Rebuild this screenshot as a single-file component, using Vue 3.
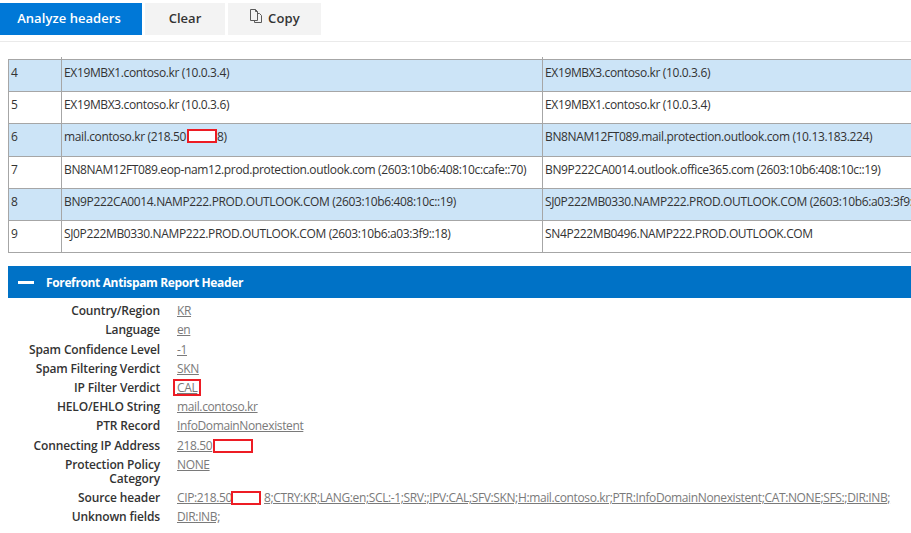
<script setup>
const rows = [
  { n: 4, a: 'EX19MBX1.contoso.kr (10.0.3.4)', b: 'EX19MBX3.contoso.kr (10.0.3.6)', blue: true },
  { n: 5, a: 'EX19MBX3.contoso.kr (10.0.3.6)', b: 'EX19MBX1.contoso.kr (10.0.3.4)' },
  { n: 6, a: 'mail.contoso.kr (218.50', mask: '8)', b: 'BN8NAM12FT089.mail.protection.outlook.com (10.13.183.224)', blue: true },
  { n: 7, a: 'BN8NAM12FT089.eop-nam12.prod.protection.outlook.com (2603:10b6:408:10c:cafe::70)', b: 'BN9P222CA0014.outlook.office365.com (2603:10b6:408:10c::19)' },
  { n: 8, a: 'BN9P222CA0014.NAMP222.PROD.OUTLOOK.COM (2603:10b6:408:10c::19)', b: 'SJ0P222MB0330.NAMP222.PROD.OUTLOOK.COM (2603:10b6:a03:3f9::18)', blue: true },
  { n: 9, a: 'SJ0P222MB0330.NAMP222.PROD.OUTLOOK.COM (2603:10b6:a03:3f9::18)', b: 'SN4P222MB0496.NAMP222.PROD.OUTLOOK.COM' }
]
const fields = [
  { k: 'Country/Region', v: 'KR' },
  { k: 'Language', v: 'en' },
  { k: 'Spam Confidence Level', v: '-1' },
  { k: 'Spam Filtering Verdict', v: 'SKN' },
  { k: 'IP Filter Verdict', v: 'CAL', box: true },
  { k: 'HELO/EHLO String', v: 'mail.contoso.kr' },
  { k: 'PTR Record', v: 'InfoDomainNonexistent' },
  { k: 'Connecting IP Address', v: '218.50', ip: true },
  { k: 'Protection Policy Category', v: 'NONE' },
  { k: 'Source header', v: 'CIP:218.50', src: '8;CTRY:KR;LANG:en;SCL:-1;SRV:;IPV:CAL;SFV:SKN;H:mail.contoso.kr;PTR:InfoDomainNonexistent;CAT:NONE;SFS:;DIR:INB;' },
  { k: 'Unknown fields', v: 'DIR:INB;' }
]
</script>

<template>
  <div class="page">
    <div class="toolbar">
      <button class="btn primary"><span class="lbl">Analyze headers</span></button>
      <button class="btn clear"><span class="lbl">Clear</span></button>
      <button class="btn copy">
        <svg width="14" height="16" viewBox="0 0 14 16" fill="none" stroke="#5a5a5a" stroke-width="1">
          <path d="M1.5 1.5h5l2 2v9h-7z" />
          <path d="M6.5 1.5v2h2" />
          <path d="M8.5 5.5h2l2 2v7h-7v-2" />
        </svg>
        <span class="lbl">Copy</span>
      </button>
    </div>

    <div class="table">
      <div class="stub">
        <div class="cell num"></div>
        <div class="cell from"></div>
      </div>
      <div v-for="r in rows" :key="r.n" class="row" :class="{ blue: r.blue }">
        <div class="cell num">{{ r.n }}</div>
        <div class="cell from">
          {{ r.a }}<span v-if="r.mask" class="mask"></span>{{ r.mask }}
        </div>
        <div class="cell to">{{ r.b }}</div>
      </div>
    </div>

    <div class="section">
      <span class="dash"></span>
      <span>Forefront Antispam Report Header</span>
    </div>

    <div class="fields">
      <div v-for="f in fields" :key="f.k" class="field">
        <div class="key">{{ f.k }}</div>
        <div class="val">
          <a :class="{ boxed: f.box }">{{ f.v }}<span v-if="f.ip" class="ipmask"></span><span v-if="f.src" class="srcmask"></span>{{ f.src }}</a>
        </div>
      </div>
    </div>
  </div>
</template>

<style scoped>
.page {
  width: 911px;
  height: 533px;
  overflow: hidden;
  background: #fff;
  font-family: "Open Sans", "Noto Sans", sans-serif;
  font-size: 12px;
  color: #333;
}
.toolbar {
  display: flex;
  gap: 3px;
  padding-top: 3px;
  height: 38px;
  border-bottom: 1px solid #eaeaea;
  box-sizing: content-box;
}
.btn {
  height: 32px;
  border: 0;
  padding: 0 0 2px;
  font-family: inherit;
  font-size: 13px;
  font-weight: 600;
  background: #f3f3f3;
  color: #333;
  display: flex;
  align-items: center;
  justify-content: center;
  gap: 5px;
}
.primary { width: 142px; background: #0078d7; color: #fff; padding-right: 4px; }
.primary .lbl { letter-spacing: 0.05px; }
.clear { width: 80px; }
.copy { width: 93px; }
.copy .lbl { letter-spacing: 0.2px; }
.copy svg { margin-top: -5px; }

.table {
  margin: 15px 0 0 8px;
  width: 1000px;
  border-bottom: 1px solid #a6a6a6;
}
.stub {
  display: flex;
  height: 2px;
}
.row {
  display: flex;
  height: 32.2px;
  box-shadow: inset 0 1px 0 #a6a6a6;
  background: #fff;
  border-left: 1px solid #a6a6a6;
}
.row.blue { background: #cce4f7; }
.stub .cell { padding: 0; }
.stub .num { width: 54px; }
.cell {
  padding: 5px 3px 0 2px;
  line-height: 18px;
  white-space: nowrap;
  overflow: hidden;
  letter-spacing: -0.36px;
  border-right: 1px solid #a6a6a6;
  box-sizing: border-box;
}
.num { width: 53px; }
.from { width: 481px; }
.to { flex: 1; border-right: 0; }
.mask {
  display: inline-block;
  width: 30px;
  height: 14px;
  margin-left: 1px;
  box-sizing: border-box;
  background: #fff;
  border: 2px solid #ed1c24;
  vertical-align: -2px;
}

.section {
  margin: 13px 0 0 8px;
  height: 32px;
  background: #0072c6;
  color: #fff;
  font-weight: 700;
  font-size: 12px;
  letter-spacing: -0.36px;
  display: flex;
  align-items: center;
  gap: 12px;
  padding-left: 10px;
}
.dash { width: 16px; height: 3px; background: #fff; }

.fields { padding-top: 3px; }
.field {
  display: flex;
  align-items: flex-start;
  line-height: 19.2px;
}
.key {
  width: 160px;
  text-align: right;
  font-weight: 600;
  letter-spacing: -0.14px;
  line-height: 14px;
  padding: 3px 0 2px;
}
.field:nth-child(9) .key { padding-left: 50px; box-sizing: border-box; }
.val {
  margin-left: 17px;
  white-space: nowrap;
  letter-spacing: -0.37px;
  color: #7a7a7a;
}
.val a { text-decoration: underline; color: #7a7a7a; }
.boxed {
  display: inline-block;
  line-height: 13px;
  padding: 0 2px;
  margin-left: -2px;
  outline: 2px solid #ed1c24;
}
.ipmask {
  display: inline-block;
  width: 40px;
  height: 14px;
  margin-left: 1px;
  box-sizing: border-box;
  border: 2px solid #ed1c24;
  vertical-align: -3px;
}
.srcmask {
  display: inline-block;
  width: 30px;
  height: 14px;
  margin-left: -1px;
  margin-right: 3px;
  box-sizing: border-box;
  border: 2px solid #ed1c24;
  vertical-align: -3px;
}
</style>
